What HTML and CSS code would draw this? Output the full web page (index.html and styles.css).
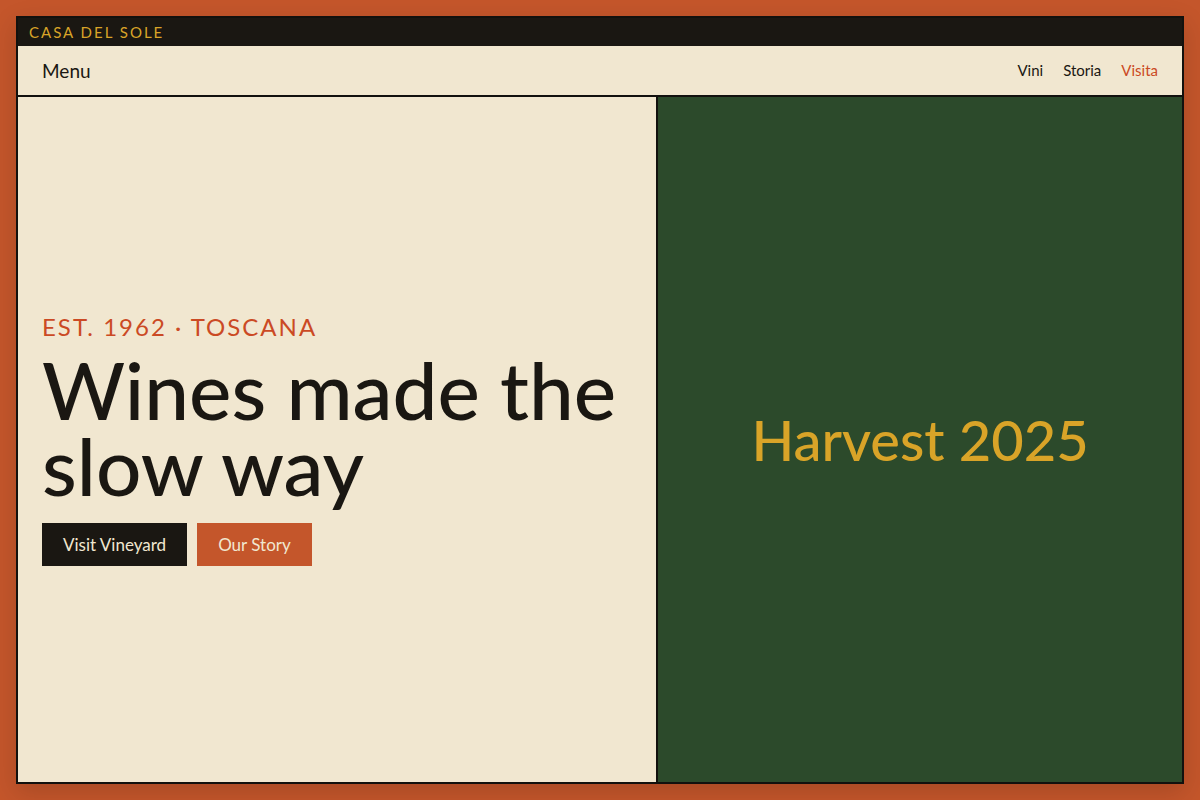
FILE: index.html
```html
<!DOCTYPE html>
<html lang="en">
<head>
<meta charset="utf-8">
<meta name="viewport" content="width=device-width, initial-scale=1">
<title>Casa del Sole</title>
<link rel="stylesheet" href="styles.css">
</head>
<body>
<div class="frame">
  <header class="brand">CASA DEL SOLE</header>
  <nav class="nav">
    <span class="nav-title">Menu</span>
    <div class="nav-links">
      <a href="#vini">Vini</a>
      <a href="#storia">Storia</a>
      <a href="#visita" class="active">Visita</a>
    </div>
  </nav>
  <main class="split">
    <section class="hero">
      <p class="eyebrow">EST. 1962 · TOSCANA</p>
      <h1 class="title">Wines made the slow way</h1>
      <div class="actions">
        <button type="button" class="btn btn-dark">Visit Vineyard</button>
        <button type="button" class="btn btn-accent">Our Story</button>
      </div>
    </section>
    <section class="harvest">
      <h2 class="harvest-title">Harvest 2025</h2>
    </section>
  </main>
</div>
</body>
</html>
```
FILE: styles.css
```css
* {
  box-sizing: border-box;
}

body {
  margin: 0;
  min-height: 100vh;
  padding: 16px;
  display: flex;
  background: #c4562b;
  color: #1a1712;
  font-family: Lato, "Open Sans", sans-serif;
}

.frame {
  flex: 1;
  display: flex;
  flex-direction: column;
  border: 2px solid #12110e;
  background: #f1e7d0;
  box-shadow: 0 8px 24px rgba(0, 0, 0, 0.15);
}

.brand {
  padding: 4px 11px;
  background: #1a1712;
  color: #d9a428;
  font-size: 15px;
  line-height: 20px;
  letter-spacing: 2px;
}

.nav {
  display: flex;
  align-items: center;
  justify-content: space-between;
  padding: 12px 24px;
  border-bottom: 2px solid #12110e;
}

.nav-title {
  font-size: 19px;
  line-height: 25px;
}

.nav-links {
  display: flex;
  gap: 20px;
  font-size: 15px;
  line-height: 25px;
}

.nav-links a {
  color: inherit;
  text-decoration: none;
}

.nav-links .active {
  color: #cb4a24;
}

.split {
  flex: 1;
  display: grid;
  grid-template-columns: 55% 45%;
}

.hero {
  display: flex;
  flex-direction: column;
  justify-content: center;
  padding: 24px;
  border-right: 2px solid #12110e;
}

.eyebrow {
  margin: 0 0 10px;
  color: #cb4a24;
  font-size: 24px;
  line-height: 28px;
  letter-spacing: 2px;
}

.title {
  margin: 0 0 20px;
  font-size: 80px;
  font-weight: 500;
  line-height: 76px;
}

.actions {
  display: flex;
  gap: 10px;
}

.btn {
  padding: 10px 21px;
  border: 0;
  color: #f1e7d0;
  font: inherit;
  font-size: 17px;
  line-height: 23px;
}

.btn-dark {
  background: #1a1712;
}

.btn-accent {
  background: #c4562b;
}

.harvest {
  display: flex;
  align-items: center;
  justify-content: center;
  padding: 24px;
  background: #2c4a2b;
}

.harvest-title {
  margin: 0;
  color: #d9a428;
  font-size: 56px;
  font-weight: 500;
  line-height: 64px;
}
```
